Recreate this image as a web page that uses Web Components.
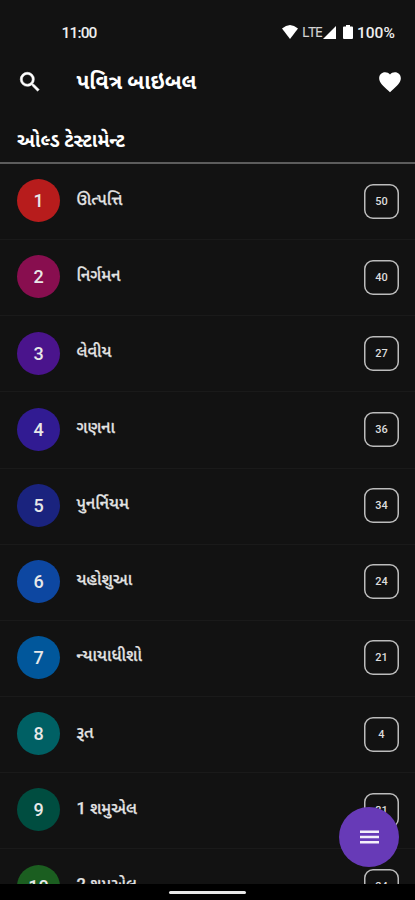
<!DOCTYPE html>
<html lang="gu">
<head>
<meta charset="utf-8">
<title>પવિત્ર બાઇબલ</title>
<style>
html, body { margin: 0; background: #121212; }
body { font-family: Roboto, "Noto Sans Gujarati", "Noto Sans", sans-serif; color: #fff; }
</style>
</head>
<body>
<bible-app></bible-app>
<script>
class BaseElement extends HTMLElement {
  constructor() {
    super();
    this.attachShadow({ mode: 'open' });
  }
  connectedCallback() { this.shadowRoot.innerHTML = this.render(); }
}

class StatusBar extends BaseElement {
  render() {
    return `<style>
      :host { display: flex; align-items: center; height: 66px; box-sizing: border-box; padding: 0 20px 0 61.5px; color: #eee; }
      .time { flex: 1; font: 500 15.5px/20px Roboto, sans-serif; letter-spacing: -.85px; }
      svg { display: block; fill: #fff; flex: none; margin-top: -2px; }
      .net { font: 400 14px/20px "Open Sans", sans-serif; width: 20px; letter-spacing: -1px; margin: -3px 1px 0 4px; color: #d4d4d4; -webkit-text-stroke: .2px; }
      .bat { margin: -2px 0 0 7px; }
      .pct { font: 500 15.5px/20px Roboto, sans-serif; margin-left: 4px; width: 38px; white-space: nowrap; letter-spacing: 0; }
    </style>
    <span class="time">11:00</span>
    <svg width="16" height="14" viewBox="0 0 16 14"><path d="M0 3.6Q8-3.4 16 3.6L8 14Z"/></svg>
    <span class="net">LTE</span>
    <svg style="margin-top:-1px" width="13" height="13" viewBox="0 0 13 13"><path d="M13 0V13H0Z"/></svg>
    <svg class="bat" width="10" height="14" viewBox="0 0 10 14"><path d="M3 0H7V1.5H9Q10 1.5 10 2.5V13Q10 14 9 14H1Q0 14 0 13V2.5Q0 1.5 1 1.5H3Z"/></svg>
    <span class="pct">100%</span>`;
  }
}

class AppHeader extends BaseElement {
  render() {
    return `<style>
      :host { display: flex; align-items: center; height: 32px; padding: 0 12.5px 0 17px; }
      svg { display: block; fill: #fff; flex: none; }
      .search { stroke: #fff; stroke-width: .5; }
      h1 { flex: 1; margin: -1px 0 0 33.5px; font-weight: 700; font-size: 21.2px; line-height: 32px; white-space: nowrap; }
    </style>
    <svg class="search" width="26" height="26" viewBox="0 0 24 24"><path d="M15.5 14h-.79l-.28-.27A6.47 6.47 0 0 0 16 9.5 6.5 6.5 0 1 0 9.5 16c1.61 0 3.09-.59 4.23-1.57l.27.28v.79l5 4.99L20.49 19l-4.99-5zm-6 0C7.01 14 5 11.99 5 9.5S7.01 5 9.5 5 14 7.01 14 9.5 11.99 14 9.5 14z"/></svg>
    <h1><slot></slot></h1>
    <svg width="26" height="26" viewBox="0 0 24 24"><path d="m12 21.35-1.45-1.32C5.4 15.36 2 12.28 2 8.5 2 5.42 4.42 3 7.5 3c1.74 0 3.41.81 4.5 2.09C13.09 3.81 14.76 3 16.5 3 19.58 3 22 5.42 22 8.5c0 3.78-3.4 6.86-8.55 11.54L12 21.35z"/></svg>`;
  }
}

class SectionTitle extends BaseElement {
  render() {
    return `<style>
      :host { display: block; box-sizing: border-box; height: 66px; padding: 28.5px 17px 0; border-bottom: 2px solid #5c5c5c; }
      h2 { margin: 0; font-weight: 700; font-size: 19px; line-height: 28px; white-space: nowrap; }
    </style><h2><slot></slot></h2>`;
  }
}

class BookRow extends BaseElement {
  render() {
    return `<style>
      :host { display: flex; align-items: center; box-sizing: border-box; height: 76.15px; padding: 0 16px 0 17px; border-bottom: 1px solid #1a1a1a; }
      .num { width: 43px; height: 43px; margin-top: -1.5px; border-radius: 50%; background: ${this.getAttribute('color')}; font: 500 18px/43px Roboto, sans-serif; text-align: center; color: #e8e8e8; flex: none; }
      .name { flex: 1; margin: -4px 0 0 16.5px; font-weight: 500; font-size: 16.4px; line-height: 26px; white-space: nowrap; color: #e4e4e4; -webkit-text-stroke: .25px; }
      .count { box-sizing: border-box; width: 35px; height: 35px; margin-top: -1px; box-shadow: inset 0 0 0 1.5px #bcbcbc; border-radius: 9px; font: 500 11px/35px Roboto, sans-serif; text-align: center; color: #ddd; flex: none; }
    </style>
    <span class="num">${this.getAttribute('number')}</span>
    <span class="name"><slot></slot></span>
    <span class="count">${this.getAttribute('chapters')}</span>`;
  }
}

class MenuButton extends BaseElement {
  render() {
    return `<style>
      :host { position: absolute; left: 339px; top: 807px; width: 60px; height: 60px; border-radius: 50%; background: #673ab7; display: grid; place-items: center; }
      svg { display: block; fill: #f4effa; }
    </style>
    <svg width="19" height="14" viewBox="0 0 19 14"><path d="M0 .6H19V3H0ZM0 5.8H19V8.2H0ZM0 11H19V13.4H0Z"/></svg>`;
  }
}

class GestureBar extends BaseElement {
  render() {
    return `<style>
      :host { display: flex; justify-content: center; height: 16px; background: #000; }
      i { width: 77px; height: 3px; margin-top: 7px; border-radius: 2px; background: #e8e8e8; }
    </style><i></i>`;
  }
}

class BibleApp extends BaseElement {
  render() {
    const books = [
      ['ઊત્પત્તિ', 50, '#b71c1c'], ['નિર્ગમન', 40, '#880e4f'], ['લેવીય', 27, '#4a148c'],
      ['ગણના', 36, '#311b92'], ['પુનર્નિયમ', 34, '#1a237e'], ['યહોશુઆ', 24, '#0d47a1'],
      ['ન્યાયાધીશો', 21, '#01579b'], ['રૂત', 4, '#006064'], ['1 શમુએલ', 31, '#004d40'],
      ['2 શમુએલ', 24, '#1b5e20']
    ];
    return `<style>
      :host { display: flex; flex-direction: column; position: relative; width: 415px; height: 900px; overflow: hidden; background: #121212; }
      status-bar, app-header, section-title, gesture-bar { flex: none; }
      main { flex: 1; min-height: 0; overflow: hidden; }
    </style>
    <status-bar></status-bar>
    <app-header>પવિત્ર બાઇબલ</app-header>
    <section-title>ઓલ્ડ ટેસ્ટામેન્ટ</section-title>
    <main>${books.map(([name, n, color], i) => `<book-row number="${i + 1}" chapters="${n}" color="${color}">${name}</book-row>`).join('')}</main>
    <gesture-bar></gesture-bar>
    <menu-button></menu-button>`;
  }
}

customElements.define('status-bar', StatusBar);
customElements.define('app-header', AppHeader);
customElements.define('section-title', SectionTitle);
customElements.define('book-row', BookRow);
customElements.define('menu-button', MenuButton);
customElements.define('gesture-bar', GestureBar);
customElements.define('bible-app', BibleApp);
</script>
</body>
</html>
